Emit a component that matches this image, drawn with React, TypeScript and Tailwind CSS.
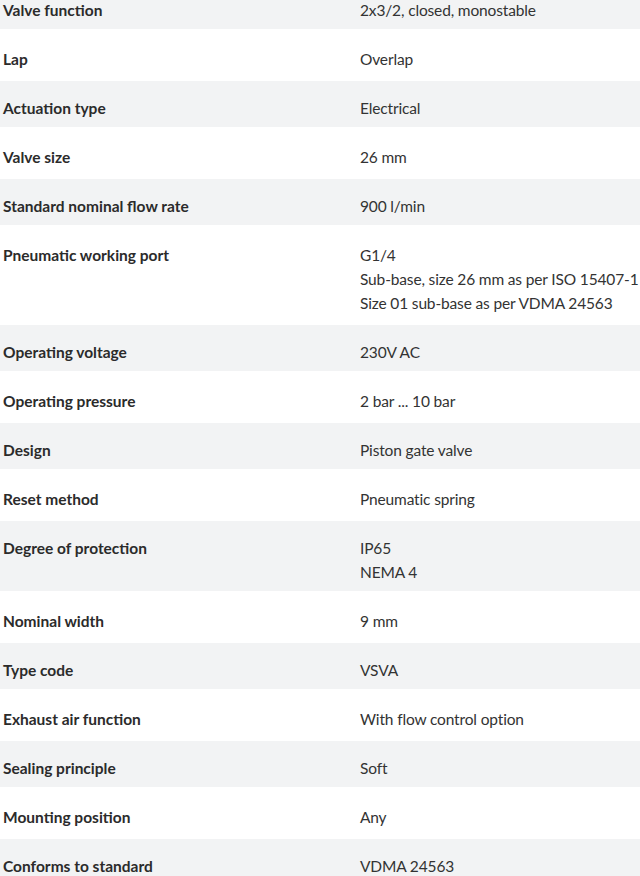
import React from "react";

const rows: { label: string; values: string[] }[] = [
  { label: "Valve function", values: ["2x3/2, closed, monostable"] },
  { label: "Lap", values: ["Overlap"] },
  { label: "Actuation type", values: ["Electrical"] },
  { label: "Valve size", values: ["26 mm"] },
  { label: "Standard nominal flow rate", values: ["900 l/min"] },
  {
    label: "Pneumatic working port",
    values: ["G1/4", "Sub-base, size 26 mm as per ISO 15407-1", "Size 01 sub-base as per VDMA 24563"],
  },
  { label: "Operating voltage", values: ["230V AC"] },
  { label: "Operating pressure", values: ["2 bar ... 10 bar"] },
  { label: "Design", values: ["Piston gate valve"] },
  { label: "Reset method", values: ["Pneumatic spring"] },
  { label: "Degree of protection", values: ["IP65", "NEMA 4"] },
  { label: "Nominal width", values: ["9 mm"] },
  { label: "Type code", values: ["VSVA"] },
  { label: "Exhaust air function", values: ["With flow control option"] },
  { label: "Sealing principle", values: ["Soft"] },
  { label: "Mounting position", values: ["Any"] },
  { label: "Conforms to standard", values: ["VDMA 24563"] },
];

export default function App() {
  return (
    <div className="w-[640px] h-[876px] overflow-hidden bg-white">
      <div
        className="mt-[-19px] flex flex-col text-[15.5px] leading-[24px] text-[#333]"
        style={{ fontFamily: "Lato, 'Liberation Sans', sans-serif" }}
      >
        {rows.map((r, i) => (
          <div
            key={r.label}
            className={
              "flex border-t-2 border-b border-white pt-[15px] pb-[7px] " +
              (i % 2 === 0 ? "bg-[#f2f3f4]" : "bg-white")
            }
          >
            <div className="w-[360px] shrink-0 pl-[3px] font-bold text-[#2b2b2b]">{r.label}</div>
            <div className="flex-1 whitespace-nowrap tracking-[-0.15px]">
              {r.values.map((v) => (
                <div key={v}>{v}</div>
              ))}
            </div>
          </div>
        ))}
      </div>
    </div>
  );
}
